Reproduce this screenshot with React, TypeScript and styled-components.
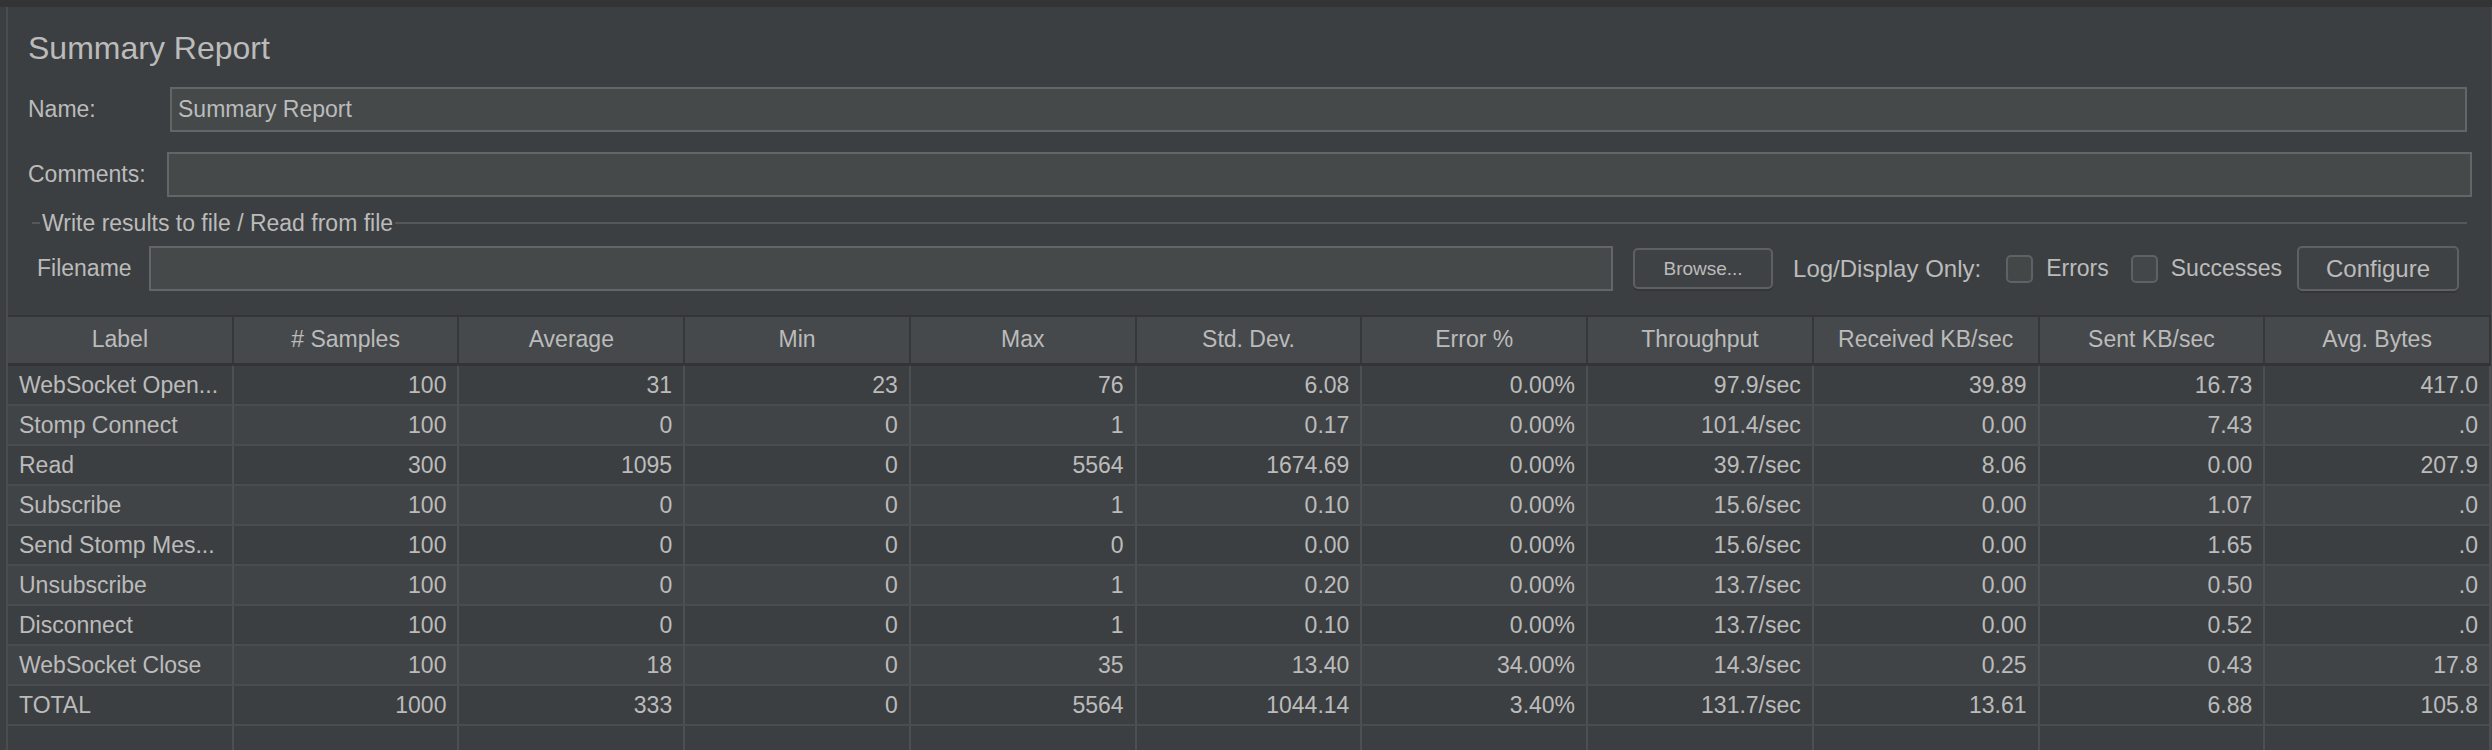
import React from 'react';
import styled, { createGlobalStyle } from 'styled-components';

const GlobalStyle = createGlobalStyle`
    html, body {
        margin: 0;
        padding: 0;
        background: #3c3f41;
    }
    * {
        box-sizing: border-box;
    }
`;

const columns = [
    'Label', '# Samples', 'Average', 'Min', 'Max', 'Std. Dev.', 'Error %',
    'Throughput', 'Received KB/sec', 'Sent KB/sec', 'Avg. Bytes',
];

const rows: string[][] = [
    ['WebSocket Open...', '100', '31', '23', '76', '6.08', '0.00%', '97.9/sec', '39.89', '16.73', '417.0'],
    ['Stomp Connect', '100', '0', '0', '1', '0.17', '0.00%', '101.4/sec', '0.00', '7.43', '.0'],
    ['Read', '300', '1095', '0', '5564', '1674.69', '0.00%', '39.7/sec', '8.06', '0.00', '207.9'],
    ['Subscribe', '100', '0', '0', '1', '0.10', '0.00%', '15.6/sec', '0.00', '1.07', '.0'],
    ['Send Stomp Mes...', '100', '0', '0', '0', '0.00', '0.00%', '15.6/sec', '0.00', '1.65', '.0'],
    ['Unsubscribe', '100', '0', '0', '1', '0.20', '0.00%', '13.7/sec', '0.00', '0.50', '.0'],
    ['Disconnect', '100', '0', '0', '1', '0.10', '0.00%', '13.7/sec', '0.00', '0.52', '.0'],
    ['WebSocket Close', '100', '18', '0', '35', '13.40', '34.00%', '14.3/sec', '0.25', '0.43', '17.8'],
    ['TOTAL', '1000', '333', '0', '5564', '1044.14', '3.40%', '131.7/sec', '13.61', '6.88', '105.8'],
];

function App() {
    return (
        <Page>
            <GlobalStyle />
            <TopStrip />
            <Panel>
                <Title>Summary Report</Title>
                <FieldRow $top={20} $right={24}>
                    <FieldLabel $width={142}>Name:</FieldLabel>
                    <TextInput defaultValue="Summary Report" />
                </FieldRow>
                <FieldRow $top={20} $right={19}>
                    <FieldLabel $width={139}>Comments:</FieldLabel>
                    <TextInput defaultValue="" />
                </FieldRow>
                <GroupHeader>
                    <GroupLine $short />
                    <GroupTitle>Write results to file / Read from file</GroupTitle>
                    <GroupLine />
                </GroupHeader>
                <FileRow>
                    <FileLabel>Filename</FileLabel>
                    <FileInput defaultValue="" />
                    <Button $small>Browse...</Button>
                    <InlineText>Log/Display Only:</InlineText>
                    <CheckItem>
                        <CheckBox />
                        <span>Errors</span>
                    </CheckItem>
                    <CheckItem>
                        <CheckBox />
                        <span>Successes</span>
                    </CheckItem>
                    <Button>Configure</Button>
                </FileRow>
                <Table>
                    {columns.map((c) => (
                        <HeadCell key={c}>{c}</HeadCell>
                    ))}
                    {rows.map((r, i) =>
                        r.map((v, j) => (
                            <Cell key={i + '-' + j} $alt={i % 2 === 1} $left={j === 0}>
                                {v}
                            </Cell>
                        ))
                    )}
                    {columns.map((c) => (
                        <FillCell key={'f-' + c} />
                    ))}
                </Table>
            </Panel>
        </Page>
    );
}

const Page = styled.div`
    width: 2492px;
    height: 750px;
    overflow: hidden;
    display: flex;
    flex-direction: column;
    background: #3c3f41;
    color: #bbbbbb;
    font-family: "Liberation Sans", Arial, sans-serif;
    font-size: 23px;
`;

const TopStrip = styled.div`
    height: 7px;
    flex-shrink: 0;
    background: #323435;
`;

const Panel = styled.div`
    flex: 1;
    display: flex;
    flex-direction: column;
    margin-left: 6px;
    border-left: 2px solid #4a4c4e;
    border-right: 1px solid #4a4c4e;
    min-height: 0;
`;

const Title = styled.div`
    margin: 23px 0 0 20px;
    font-size: 32px;
    line-height: 37px;
    color: #bbbbbb;
`;

const FieldRow = styled.div<{ $top: number; $right: number }>`
    display: flex;
    align-items: center;
    margin-top: ${(p) => p.$top}px;
    padding-left: 20px;
    padding-right: ${(p) => p.$right}px;
`;

const FieldLabel = styled.label<{ $width: number }>`
    width: ${(p) => p.$width}px;
    flex-shrink: 0;
`;

const TextInput = styled.input`
    flex: 1;
    min-width: 0;
    height: 45px;
    padding: 0 6px;
    background: #45494a;
    border: 2px solid #646566;
    color: #bbbbbb;
    font-family: "Liberation Sans", Arial, sans-serif;
    font-size: 23px;
    outline: none;
`;

const GroupHeader = styled.div`
    display: flex;
    align-items: center;
    margin: 13px 24px 0 24px;
    height: 26px;
`;

const GroupLine = styled.div<{ $short?: boolean }>`
    height: 2px;
    background: #555758;
    ${(p) => (p.$short ? 'width: 8px; margin-right: 2px;' : 'flex: 1; margin-left: 2px;')}
`;

const GroupTitle = styled.span`
    line-height: 26px;
    white-space: nowrap;
`;

const FileRow = styled.div`
    display: flex;
    align-items: center;
    margin-top: 10px;
    padding: 0 32px 0 29px;
    height: 45px;
`;

const FileLabel = styled.label`
    margin-right: 17px;
`;

const FileInput = styled(TextInput)`
    margin-right: 20px;
`;

const Button = styled.div<{ $small?: boolean }>`
    display: flex;
    align-items: center;
    justify-content: center;
    height: ${(p) => (p.$small ? 41 : 45)}px;
    width: ${(p) => (p.$small ? 140 : 162)}px;
    border: 2px solid #5e6061;
    border-radius: 5px;
    background: #3f4244;
    box-shadow: 0 2px 0 #343637;
    font-size: ${(p) => (p.$small ? 19 : 24)}px;
    color: #bbbbbb;
    flex-shrink: 0;
`;

const InlineText = styled.span`
    margin: 0 25px 0 20px;
    font-size: 24px;
    white-space: nowrap;
`;

const CheckItem = styled.label`
    display: flex;
    align-items: center;
    gap: 13px;
    margin-right: 22px;
    white-space: nowrap;
    &:last-of-type {
        margin-right: 15px;
    }
`;

const CheckBox = styled.span`
    display: inline-block;
    width: 27px;
    height: 28px;
    border: 2px solid #5f6263;
    border-radius: 5px;
    background: #434748;
`;

const Table = styled.div`
    margin-top: 24px;
    display: grid;
    grid-template-columns: repeat(11, 1fr);
    grid-template-rows: 51px repeat(9, 40px) 1fr;
    flex: 1;
    min-height: 0;
`;

const HeadCell = styled.div`
    display: flex;
    align-items: center;
    justify-content: center;
    background: #46494b;
    border-top: 2px solid #333537;
    border-bottom: 3px solid #323436;
    border-right: 2px solid #353739;
    padding-bottom: 1px;
    white-space: nowrap;
    overflow: hidden;
`;

const Cell = styled.div<{ $alt: boolean; $left: boolean }>`
    display: flex;
    align-items: center;
    justify-content: ${(p) => (p.$left ? 'flex-start' : 'flex-end')};
    padding: 0 11px;
    background: ${(p) => (p.$alt ? '#414446' : '#3c3f41')};
    border-right: 2px solid #4d5052;
    border-bottom: 2px solid #4a4d4f;
    white-space: nowrap;
    overflow: hidden;
`;

const FillCell = styled.div`
    background: #3c3f41;
    border-right: 2px solid #4d5052;
`;

export default App;
